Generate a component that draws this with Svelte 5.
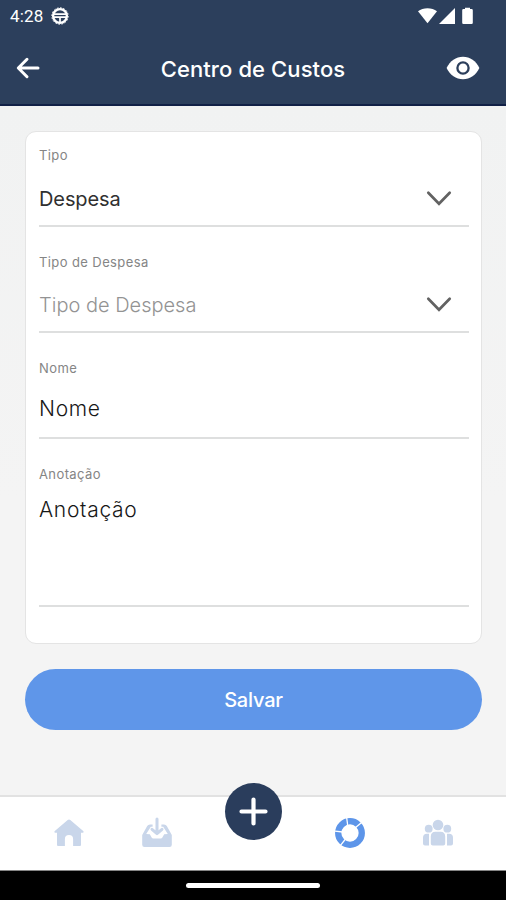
<script>
  const fields = [
    { label: 'Tipo', value: 'Despesa', kind: 'select', tone: 'chosen' },
    { label: 'Tipo de Despesa', value: 'Tipo de Despesa', kind: 'select', tone: 'muted' },
    { label: 'Nome', value: 'Nome', kind: 'input', tone: 'strong' },
    { label: 'Anotação', value: 'Anotação', kind: 'area', tone: 'strong' }
  ];
</script>

<div class="screen">
  <header>
    <div class="status">
      <span class="time">4:28</span>
      <svg class="debug" width="18" height="18" viewBox="0 0 18 18" fill="none" stroke="#fff">
        <circle cx="9" cy="9" r="6.9" stroke-width="2.3" />
        <circle cx="9" cy="9" r="8.2" stroke-width="1" stroke-dasharray="1.7 1.5" />
        <path d="M2.5 7.2h13M3 10.1h12M9 10v5.5" stroke-width="1.7" />
      </svg>
      <svg class="signals" width="57" height="18" viewBox="0 0 57 18" fill="#fff">
        <path d="M0 4.2C5 .2 14 .2 19 4.2L9.5 16.3z" />
        <path d="M37 1v16H21z" />
        <path d="M44.2 3.2q0-1.2 1.2-1.2h1.6V.8h5V2h1.6q1.2 0 1.2 1.2v12.6q0 1.2-1.2 1.2h-8.2q-1.2 0-1.2-1.2z" />
      </svg>
    </div>
    <div class="bar">
      <svg class="back" width="24" height="22" viewBox="0 0 24 22" fill="none" stroke="#fff" stroke-width="3" stroke-linecap="round" stroke-linejoin="round">
        <path d="M22 11H2.4M11 2.3L2.3 11l8.7 8.7" />
      </svg>
      <h1>Centro de Custos</h1>
      <svg class="eye" width="34" height="24" viewBox="0 0 34 24">
        <path d="M.6 12C4 4.8 10 .8 17 .8S30 4.8 33.4 12C30 19.2 24 23.2 17 23.2S4 19.2.6 12z" fill="#fff" />
        <circle cx="17" cy="12" r="5.6" fill="none" stroke="#2c3f5c" stroke-width="2.3" />
      </svg>
    </div>
  </header>

  <main>
    <section class="card">
      {#each fields as field}
        <div class="field {field.kind}">
          <span class="label">{field.label}</span>
          <div class="value {field.tone}">
            <span>{field.value}</span>
            {#if field.kind === 'select'}
              <svg width="26" height="17" viewBox="0 0 26 17" fill="none" stroke="#626262" stroke-width="2.7" stroke-linecap="round">
                <path d="M2.3 2.8L13 13.7 23.7 2.8" />
              </svg>
            {/if}
          </div>
        </div>
      {/each}
    </section>
    <button class="save">Salvar</button>
  </main>

  <nav>
    <div class="slot">
      <svg width="30" height="30" viewBox="0 0 30 30" fill="#c9d6ea">
        <path d="M13.7 2q1.3-1 2.6 0L29.2 13q1.1 1.4-.5 1.8h-1.7v12.1q0 1.1-1.1 1.1h-6.8v-6.9q0-4-4.1-4t-4.1 4V28H4.1q-1.1 0-1.1-1.1V14.8H1.3q-1.6-.4-.5-1.8z" />
      </svg>
    </div>
    <div class="slot">
      <svg width="30" height="31" viewBox="0 0 30 31">
        <path d="M.2 18L5.2 9Q6 7.5 8 7.5h2.6v2.3H8.8L4.2 17l3.6.2 2 3.5q.4.8 1.4.8h7.6q1 0 1.4-.8l2-3.5 3.6-.2-4.6-7.2h-1.8V7.5H22q2 0 2.8 1.5l5 9v9.7q0 2.3-2.3 2.3h-25Q.2 30 .2 27.7z" fill="#c9d6ea" />
        <path d="M15 2v14M10 12.3l5 4.3 5-4.3" fill="none" stroke="#c9d6ea" stroke-width="3" stroke-linecap="round" stroke-linejoin="round" />
      </svg>
    </div>
    <div class="slot middle">
      <div class="add">
        <svg width="29" height="29" viewBox="0 0 29 29" stroke="#fff" stroke-width="4.2" stroke-linecap="round">
          <path d="M14.5 2.5v24M2.5 14.5h24" />
        </svg>
      </div>
    </div>
    <div class="slot">
      <svg width="30" height="30" viewBox="0 0 30 30">
        <circle cx="15" cy="15" r="11.8" fill="none" stroke="#5d95e9" stroke-width="6.3" />
        <path d="M12.7 7.5L11.7 0M20.6 9.6L26.6 4.6M7.6 14L0 13.2M10.5 21L5.5 27.3" stroke="#fff" stroke-width="1.3" />
      </svg>
    </div>
    <div class="slot">
      <svg width="30" height="28" viewBox="0 0 30 28" fill="#c9d6ea">
        <circle cx="15" cy="6" r="5.3" />
        <circle cx="5.7" cy="9.7" r="3.9" />
        <circle cx="24.3" cy="9.7" r="3.9" />
        <path d="M7.8 17.5q0-4.7 4.7-4.7h5q4.7 0 4.7 4.7v7q0 2-2 2H9.8q-2 0-2-2zM6 14.7v11.8H2q-2 0-2-2v-5.8q0-4 4-4zM24 14.7v11.8h4q2 0 2-2v-5.8q0-4-4-4z" />
      </svg>
    </div>
  </nav>
  <footer><div class="pill"></div></footer>
</div>

<style>
  .screen {
    width: 506px;
    height: 900px;
    display: flex;
    flex-direction: column;
    overflow: hidden;
    background: linear-gradient(#f1f2f2 106px, #f4f4f4 500px);
    font-family: Inter, sans-serif;
  }
  header {
    height: 106px;
    box-sizing: border-box;
    background: #2c3f5c;
    border-bottom: 2px solid #112046;
    color: #fff;
  }
  .status {
    height: 31px;
    display: flex;
    align-items: center;
    padding: 0 31px 0 10px;
  }
  .time {
    font: 400 17px/20px Roboto, sans-serif;
    letter-spacing: 0.2px;
    width: 41px;
  }
  .signals { margin-left: auto; }
  .bar {
    height: 75px;
    display: grid;
    grid-template-columns: 34px 1fr 34px;
    align-items: center;
    padding: 0 26px 0 16px;
  }
  h1 {
    margin: 0 -10px 0 0;
    text-align: center;
    font-size: 22px;
    line-height: 28px;
    font-weight: 500;
    letter-spacing: 0.1px;
    white-space: nowrap;
  }
  .eye { margin-top: -2px; }
  .back { margin-top: -2px; }
  main {
    height: 689px;
    box-sizing: border-box;
    padding: 25px 24px 0 25px;
  }
  .card {
    height: 513px;
    box-sizing: border-box;
    border: 1px solid #e4e4e4;
    border-radius: 11px;
    background: #fff;
    padding: 0 12px 0 13px;
  }
  .field {
    height: 106px;
    box-sizing: border-box;
    display: flex;
    flex-direction: column;
    padding-top: 26px;
  }
  .field:first-child { height: 95px; padding-top: 14px; }
  .label {
    font-size: 13px;
    line-height: 18px;
    letter-spacing: 0.4px;
    color: #858585;
  }
  .value {
    flex: 1;
    display: flex;
    align-items: center;
    justify-content: space-between;
    border-bottom: 2px solid #dedfdf;
    padding: 8px 17px 0 0;
    font-size: 20px;
    line-height: 26px;
  }
  .chosen { color: #303030; letter-spacing: -0.1px; }
  .muted { color: #939393; font-weight: 300; }
  .strong {
    color: #171717;
    font-size: 21px;
    font-weight: 350;
    letter-spacing: 0.7px;
  }
  .value svg { margin-top: -1px; }
  .input .value { padding-top: 3px; }
  .area { height: 168px; }
  .area .value { align-items: flex-start; padding-top: 14px; }
  .save {
    display: block;
    width: 100%;
    height: 61px;
    margin-top: 25px;
    padding: 1px 0 0;
    border: 0;
    border-radius: 31px;
    background: #5f96e9;
    color: #fff;
    font: 500 20px/26px Inter, sans-serif;
    letter-spacing: -0.2px;
  }
  nav {
    height: 76px;
    box-sizing: border-box;
    display: flex;
    background: #fff;
    border-top: 2px solid #e2e2e2;
    border-bottom: 1px solid #858585;
    padding: 0 24px 0 25px;
  }
  .slot {
    position: relative;
    flex: 0 0 88px;
    display: flex;
    align-items: center;
    justify-content: center;
  }
  .slot:not(.middle) { padding-bottom: 2px; box-sizing: border-box; }
  .middle { flex: 1; }
  .add {
    position: absolute;
    top: -14px;
    width: 57px;
    height: 57px;
    border-radius: 50%;
    background: #2a3d5c;
    display: grid;
    place-items: center;
  }
  footer {
    height: 29px;
    background: #000;
    display: flex;
    justify-content: center;
    align-items: center;
  }
  .pill {
    width: 134px;
    height: 5px;
    border-radius: 3px;
    background: #fff;
  }
</style>
